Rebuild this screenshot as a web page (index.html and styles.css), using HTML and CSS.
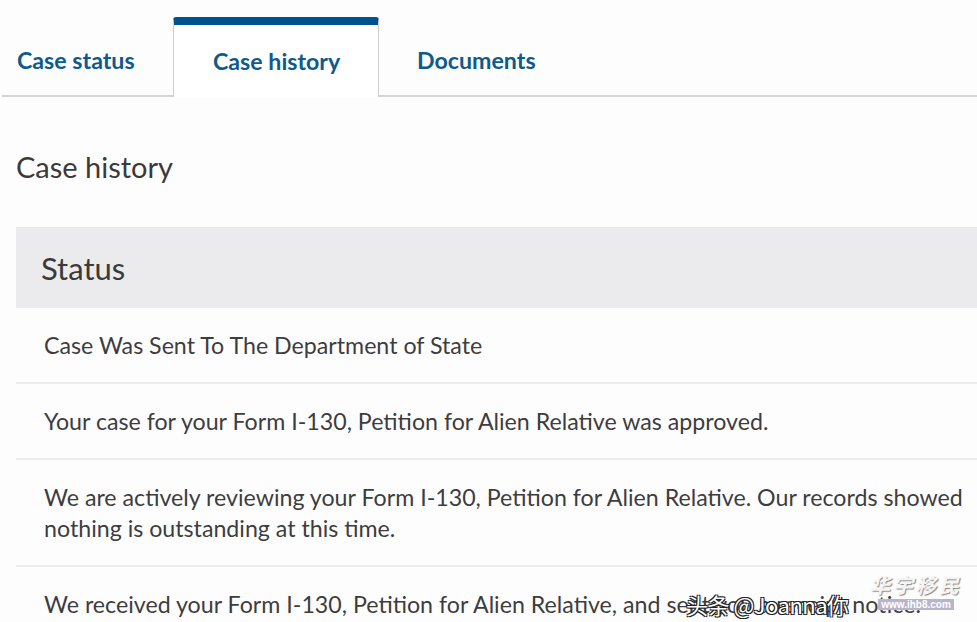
FILE: index.html
```html
<!DOCTYPE html>
<html>
<head>
<meta charset="utf-8">
<link rel="stylesheet" href="styles.css">
</head>
<body>
<div class="page">
  <nav class="tabs">
    <div class="tab tab-first">Case status</div>
    <div class="tab tab-active">Case history</div>
    <div class="tab">Documents</div>
  </nav>
  <main class="content">
    <h1 class="title">Case history</h1>
    <section class="table">
      <div class="table-head">Status</div>
      <div class="row">Case Was Sent To The Department of State</div>
      <div class="row">Your case for your Form I-130, Petition for Alien Relative was approved.</div>
      <div class="row">We are actively reviewing your Form I-130, Petition for Alien Relative. Our records showed nothing is outstanding at this time.</div>
      <div class="row">We received your Form I-130, Petition for Alien Relative, and sent you a receipt notice.</div>
    </section>
  </main>
  <div class="watermark">头条 @Joanna你</div>
  <div class="logo"><span class="logo-cn">华宇移民</span><span class="logo-url">www.ihb8.com</span></div>
</div>
</body>
</html>
```
FILE: styles.css
```css
html, body {
  margin: 0;
  padding: 0;
  background: #fdfdfd;
  overflow: hidden;
}
.page {
  width: 977px;
  height: 622px;
  position: relative;
  overflow: hidden;
  font-family: "Source Sans Pro", Lato, "Open Sans", sans-serif;
  color: #3d3d3d;
}
.tabs {
  display: flex;
  align-items: flex-end;
  padding-top: 17px;
  margin-left: 2px;
  border-bottom: 2px solid #d4d4d4;
}
.tab {
  box-sizing: border-box;
  height: 70px;
  display: flex;
  align-items: center;
  padding: 0 38px;
  font-size: 23.2px;
  font-weight: 700;
  color: #0f5a8c;
  white-space: nowrap;
}
.tab-first {
  padding-left: 15px;
  width: 171px;
}
.tab-active {
  width: 206px;
  height: 80px;
  padding: 0 0 0 39px;
  border-top: 8px solid #00528f;
  border-left: 1px solid #cfcfcf;
  border-right: 1px solid #cfcfcf;
  border-radius: 3px 3px 0 0;
  background: #ffffff;
  margin-bottom: -2px;
}
.content {
  padding-left: 16px;
}
.title {
  margin: 0;
  padding-top: 52px;
  height: 78px;
  font-size: 29px;
  font-weight: 400;
  color: #3a3a3a;
  line-height: 36px;
}
.table-head {
  background: #ebebed;
  height: 81px;
  box-sizing: border-box;
  padding-left: 25px;
  display: flex;
  align-items: center;
  font-size: 31px;
  color: #3a3a3a;
}
.row {
  padding: 22px 2px 21px 28px;
  font-size: 23.2px;
  line-height: 31px;
  border-bottom: 2px solid #ececec;
  color: #3d3d3d;
}
.watermark {
  position: absolute;
  left: 686px;
  top: 588px;
  font-family: "Noto Sans CJK SC", sans-serif;
  font-size: 22px;
  letter-spacing: -0.5px;
  color: #ffffff;
  text-shadow: 1px 1px 0 #222, -1px -1px 0 #222, 1px -1px 0 #222, -1px 1px 0 #222;
  white-space: nowrap;
}
.logo {
  position: absolute;
  left: 870px;
  top: 570px;
  display: flex;
  flex-direction: column;
  align-items: center;
}
.logo-cn {
  font-family: "Noto Sans CJK SC", sans-serif;
  font-size: 20px;
  font-weight: 700;
  color: #f4f4f4;
  letter-spacing: 3px;
  text-shadow: 1px 1px 1px #888;
  font-style: italic;
}
.logo-url {
  font-family: "Liberation Sans", sans-serif;
  font-size: 10px;
  font-weight: 700;
  color: #ffffff;
  background: #b8b4cc;
  padding: 0 3px;
}
```
